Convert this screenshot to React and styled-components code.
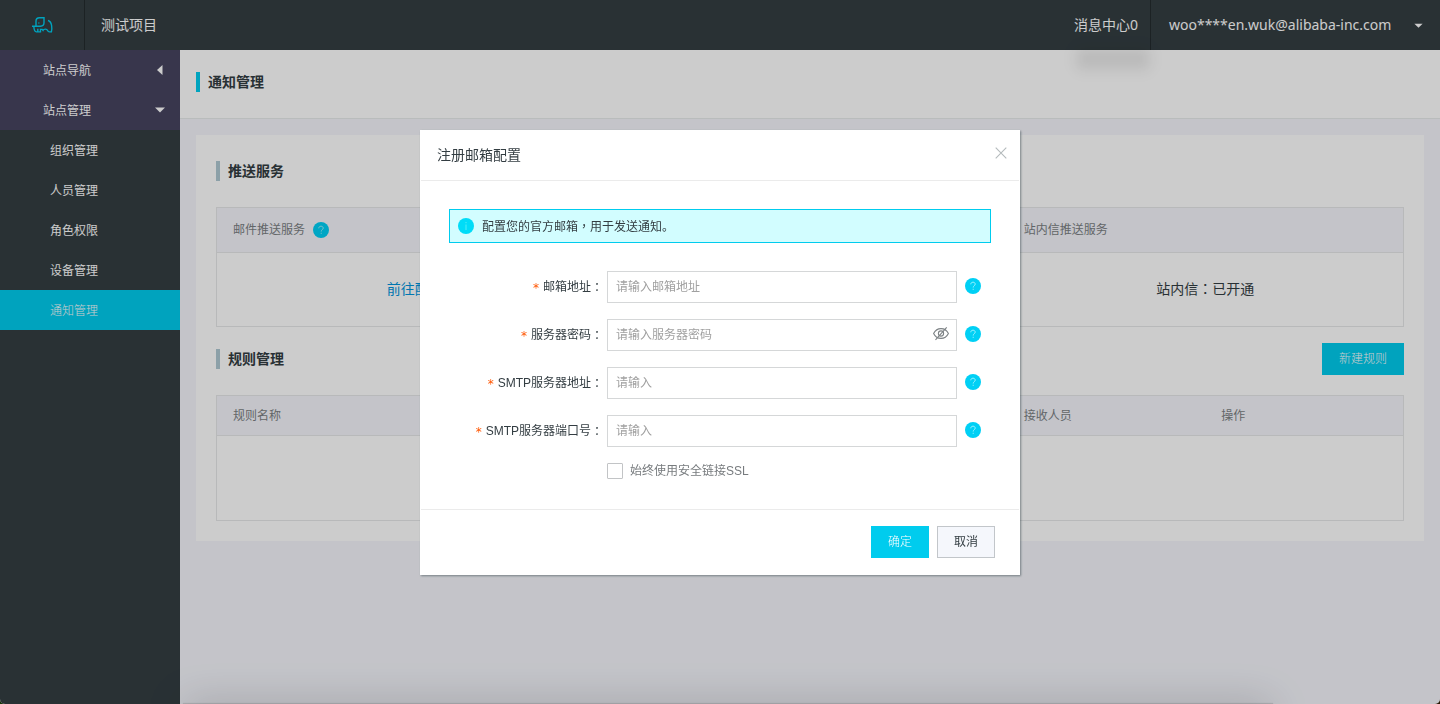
import React, { useState } from 'react';
import styled, { createGlobalStyle, css } from 'styled-components';

const latin = '"Noto Sans", "Noto Sans CJK SC", sans-serif';
const base = '"Liberation Sans", "Noto Sans CJK SC", sans-serif';

const GlobalStyle = createGlobalStyle`
  *, *::before, *::after { box-sizing: border-box; }
  body {
    margin: 0;
    background: linear-gradient(90deg, #17350a, #2b1a05);
    font-family: ${base};
    font-size: 12px;
    line-height: 20px;
    color: #333d42;
  }
  button, input { font: inherit; color: inherit; }
  a { text-decoration: none; }
  h1, h2 { margin: 0; }
`;

const Shell = styled.div`
  position: relative;
  min-height: 100vh;
  display: flex;
  flex-direction: column;
  overflow: hidden;
  border-radius: 0 0 5px 5px;
  background: #f5f6fc;
`;

const TopBar = styled.header`
  height: 50px;
  display: flex;
  align-items: stretch;
  background: #343e42;
  color: #fff;
  font-family: ${latin};
  font-size: 14px;
`;

const LogoLink = styled.a`
  width: 85px;
  display: flex;
  align-items: center;
  justify-content: center;
  border-right: 1px solid #232b2e;
  color: #00ccee;
`;

const ProjectName = styled.div`
  flex: 1;
  display: flex;
  align-items: center;
  padding: 0 16px;
`;

const TopItem = styled.button`
  display: flex;
  align-items: center;
  gap: 14px;
  border: 0;
  background: none;
  padding: 0 16px 0 18px;
`;

const MessageItem = styled(TopItem)`
  position: relative;
  padding: 0 12px;
  border-right: 1px solid #232b2e;

  &::after {
    content: '';
    position: absolute;
    left: 18px;
    right: 4px;
    bottom: -16px;
    height: 14px;
    background: rgba(0, 0, 0, 0.08);
    box-shadow: 0 0 12px 4px rgba(0, 0, 0, 0.08);
    filter: blur(4px);
  }
`;

const UserName = styled.span`
  min-width: 230px;
  text-align: left;
`;

const Columns = styled.div`
  flex: 1;
  display: flex;
`;

const SideBar = styled.nav`
  flex: 0 0 180px;
  background: #343e42;
`;

const rowBase = css`
  width: 100%;
  height: 40px;
  display: flex;
  align-items: center;
  color: #fff;
`;

const GroupButton = styled.button`
  ${rowBase}
  justify-content: space-between;
  border: 0;
  padding: 2px 14px 0 43px;
  background: #464460;

  svg { margin-bottom: 2px; }
`;

const MenuLink = styled.a`
  ${rowBase}
  padding: 2px 0 0 50px;
  background: ${(p) => (p.$active ? '#00ccee' : 'transparent')};
  font-weight: ${(p) => (p.$active ? 300 : 400)};
`;

const Main = styled.main`
  flex: 1;
  min-width: 0;
`;

const PageHead = styled.div`
  height: 69px;
  display: flex;
  align-items: center;
  padding: 0 16px 4px;
  background: #fff;
  border-bottom: 1px solid #e8ebeb;
`;

const Heading = styled.h2`
  display: flex;
  gap: 8px;
  font-size: 14px;
  line-height: 20px;
  font-weight: 700;

  &::before {
    content: '';
    width: 4px;
    height: 20px;
    background: ${(p) => p.$accent};
  }
`;

const Card = styled.section`
  margin: 16px;
  padding: 20px;
  background: #fff;
`;

const SectionHead = styled.div`
  height: 32px;
  display: flex;
  align-items: center;
  justify-content: space-between;
  margin: ${(p) => (p.$spaced ? '16px 0 20px' : '0 0 20px')};
`;

const Button = styled.button`
  height: 32px;
  padding: 0 16px;
  font-weight: ${(p) => (p.$primary ? 300 : 400)};
  color: ${(p) => (p.$primary ? '#fff' : '#333d42')};
  background: ${(p) => (p.$primary ? '#00ccee' : '#f5f7fc')};
  border: 1px solid ${(p) => (p.$primary ? '#00ccee' : '#c2c6ca')};
`;

const Table = styled.table`
  width: 100%;
  table-layout: fixed;
  border-collapse: separate;
  border-spacing: 0;
  border: 1px solid #e6e8e9;

  th {
    height: ${(p) => p.$headHeight};
    padding: 0 16px;
    text-align: left;
    font-weight: 400;
    color: #7b7f83;
    background: #f5f6fc;
    border-bottom: 1px solid #e6e8e9;
  }

  td {
    height: ${(p) => p.$bodyHeight};
    padding: 0 16px 2px;
    text-align: center;
    font-size: 14px;
  }
`;

const ThContent = styled.span`
  display: flex;
  align-items: center;
  gap: 8px;
`;

const ConfigLink = styled.a`
  color: #0094dd;
`;

const Punct = styled.span`
  font-family: "Noto Sans CJK TC", sans-serif;
`;

const Mask = styled.div`
  position: fixed;
  inset: 0;
  display: flex;
  justify-content: center;
  align-items: flex-start;
  padding-top: 130px;
  border-radius: 0 0 5px 5px;
  background: rgba(0, 0, 0, 0.2);
`;

const WindowShade = styled.div`
  position: fixed;
  left: 184px;
  right: 168px;
  bottom: -20px;
  height: 20px;
  box-shadow: 0 0 40px rgba(0, 0, 0, 0.22), 0 0 1px 1px rgba(0, 0, 0, 0.12);
`;

const Dialog = styled.form`
  width: 600px;
  border: 1px solid #fff;
  background: #fff;
  box-shadow: 1px 1px 2px rgba(40, 55, 62, 0.5);
`;

const DialogHead = styled.div`
  height: 50px;
  display: flex;
  align-items: center;
  justify-content: space-between;
  padding: 0 10px 2px 16px;
  border-bottom: 1px solid #ebebeb;
`;

const DialogTitle = styled.h1`
  font-size: 14px;
  font-weight: 400;
`;

const CloseButton = styled.button`
  display: flex;
  padding: 0 2px 4px;
  border: 0;
  background: none;
  color: #b4babc;
`;

const DialogBody = styled.div`
  padding: 28px;
`;

const Notice = styled.div`
  height: 34px;
  display: flex;
  align-items: center;
  gap: 8px;
  margin-bottom: 28px;
  padding: 0 8px;
  border: 1px solid #00ccee;
  background: #d2fdff;
`;

const FieldRow = styled.div`
  display: grid;
  grid-template-columns: 158px 350px 24px;
  align-items: center;
  justify-items: stretch;
  margin-bottom: 16px;
`;

const FieldLabel = styled.label`
  display: flex;
  justify-content: flex-end;
  padding-right: 4px;
  white-space: nowrap;
`;

const Required = styled.span`
  margin-right: 4px;
  padding-top: 2px;
  line-height: 18px;
  color: #ff5500;
  font-family: "DejaVu Sans", sans-serif;
`;

const InputBox = styled.div`
  height: 32px;
  display: flex;
  align-items: center;
  padding: 0 7px 0 8px;
  border: 1px solid #d5d7d8;
  background: #fff;
`;

const Input = styled.input`
  flex: 1;
  min-width: 0;
  padding: 0;
  border: 0;
  outline: 0;
  background: none;

  &::placeholder { color: #a0a0a0; opacity: 1; }
`;

const IconButton = styled.button`
  display: flex;
  padding: 0 0 2px;
  border: 0;
  background: none;
  color: #7d8285;
`;

const FieldHelp = styled.span`
  display: flex;
  justify-content: flex-end;
  padding-bottom: 2px;
`;

const CheckLabel = styled.label`
  height: 18px;
  display: flex;
  align-items: flex-start;
  gap: 7px;
  padding-left: 158px;
  line-height: 16px;
  color: #777b7e;
`;

const CheckBox = styled.input`
  appearance: none;
  width: 16px;
  height: 16px;
  margin: 0;
  border: 1px solid #c2c4c6;
  border-radius: 1px;
  background: #fff;

  &:checked { background: #00ccee; }
`;

const DialogFoot = styled.div`
  display: flex;
  justify-content: flex-end;
  gap: 8px;
  padding: 16px 24px;
  border-top: 1px solid #ebebeb;
`;

const Elephant = () => (
  <svg width="22" height="18" viewBox="0 0 22 18" fill="none" stroke="currentColor" strokeWidth="1.4" aria-hidden="true">
    <path d="M1 10.200h8.500c2 0 3.500-1.400 3.500-3.400V1.800H8.500C6.300 1.800 5 3.200 5 5.300v4.900" />
    <path d="M2.800 10.500c.2 2.600.8 5.200 2.600 5.400h1.400v-3.200M6.800 15.900h2.700v-2.500h1.700l.8 1c.8-1.600 3.800-1.800 4.600.2.300.8.900 1.300 1.900 1.300h1.900c.5-1.600.5-4.300.2-6.400-.4-2.500-1.500-4.400-3.600-5" />
    <path d="M7.800 6.500v.900" />
  </svg>
);

const CaretLeft = () => (
  <svg width="12" height="12" viewBox="0 0 12 12" fill="#fff" aria-hidden="true">
    <path d="M8.500 1v10L3 6z" />
  </svg>
);

const CaretDown = ({ small }) => (
  <svg width={small ? 11 : 12} height={small ? 11 : 12} viewBox="0 0 12 12" fill="#fff" aria-hidden="true">
    <path d={small ? 'M1.500 4h9L6 8.500z' : 'M1 3.500h10L6 8.500z'} />
  </svg>
);

const HelpIcon = () => (
  <svg width="16" height="16" viewBox="0 0 16 16" role="img" aria-label="帮助">
    <circle cx="8" cy="8" r="8" fill="#00d0f5" />
    <path d="M5.800 6.300C5.800 5 6.700 4.200 8 4.200s2.200.8 2.200 1.900c0 1.600-2 1.700-2 3.400M8.200 10.800v1" fill="none" stroke="#9df3ff" strokeWidth="1" />
  </svg>
);

const InfoIcon = () => (
  <svg width="16" height="16" viewBox="0 0 16 16" aria-hidden="true">
    <circle cx="8" cy="8" r="8" fill="#00dcf8" />
    <path d="M8 4v1.200M8 6.500V12" stroke="#55ecf5" strokeWidth="1" />
  </svg>
);

const CloseIcon = () => (
  <svg width="12" height="12" viewBox="0 0 12 12" stroke="currentColor" strokeWidth="1.100" aria-hidden="true">
    <path d="M.7.7l10.600 10.600M11.300.7L.7 11.300" />
  </svg>
);

const EyeOff = () => (
  <svg width="16" height="16" viewBox="0 0 16 16" fill="none" stroke="currentColor" strokeWidth="1.100" aria-hidden="true">
    <path d="M.6 7.500C2.200 4.300 4.800 2.600 8 2.600s5.800 1.700 7.400 4.900c-1.600 3.200-4.200 4.900-7.400 4.900S2.200 10.700.6 7.500z" />
    <circle cx="8" cy="7.500" r="2.600" />
    <path d="M13.700 1.300L2.500 13.800" />
  </svg>
);

const menu = ['组织管理', '人员管理', '角色权限', '设备管理', '通知管理'];

const ruleColumns = ['规则名称', '', '', '', '接收人员', '操作'];

const fields = [
  { id: 'mail', label: '邮箱地址', hint: '请输入邮箱地址' },
  { id: 'password', label: '服务器密码', hint: '请输入服务器密码', secret: true },
  { id: 'smtp-host', label: 'SMTP服务器地址', hint: '请输入' },
  { id: 'smtp-port', label: 'SMTP服务器端口号', hint: '请输入' },
];

function Field({ id, label, hint, secret }) {
  const [shown, setShown] = useState(false);
  return (
    <FieldRow>
      <FieldLabel htmlFor={id}>
        <Required>*</Required>
        {label}
        <Punct>：</Punct>
      </FieldLabel>
      <InputBox>
        <Input id={id} type={secret && !shown ? 'password' : 'text'} placeholder={hint} />
        {secret && (
          <IconButton type="button" aria-label="显示密码" onClick={() => setShown(!shown)}>
            <EyeOff />
          </IconButton>
        )}
      </InputBox>
      <FieldHelp><HelpIcon /></FieldHelp>
    </FieldRow>
  );
}

export default function App() {
  return (
    <>
      <GlobalStyle />
      <Shell>
        <TopBar>
          <LogoLink href="#" aria-label="首页"><Elephant /></LogoLink>
          <ProjectName>测试项目</ProjectName>
          <MessageItem type="button">消息中心0</MessageItem>
          <TopItem type="button">
            <UserName>woo****en.wuk@alibaba-inc.com</UserName>
            <CaretDown small />
          </TopItem>
        </TopBar>
        <Columns>
          <SideBar>
            <GroupButton type="button">站点导航<CaretLeft /></GroupButton>
            <GroupButton type="button">站点管理<CaretDown /></GroupButton>
            {menu.map((name) => (
              <MenuLink key={name} href="#" $active={name === '通知管理'}>{name}</MenuLink>
            ))}
          </SideBar>
          <Main>
            <PageHead>
              <Heading $accent="#00ccee">通知管理</Heading>
            </PageHead>
            <Card>
              <SectionHead>
                <Heading $accent="#b0c8d2">推送服务</Heading>
              </SectionHead>
              <Table $headHeight="45px" $bodyHeight="73px">
                <thead>
                  <tr>
                    <th><ThContent>邮件推送服务<HelpIcon /></ThContent></th>
                    <th />
                    <th>站内信推送服务</th>
                  </tr>
                </thead>
                <tbody>
                  <tr>
                    <td><ConfigLink href="#">前往配置</ConfigLink></td>
                    <td />
                    <td>站内信<Punct>：</Punct>已开通</td>
                  </tr>
                </tbody>
              </Table>
              <SectionHead $spaced>
                <Heading $accent="#b0c8d2">规则管理</Heading>
                <Button type="button" $primary>新建规则</Button>
              </SectionHead>
              <Table $headHeight="40px" $bodyHeight="84px">
                <thead>
                  <tr>{ruleColumns.map((name, i) => <th key={i}>{name}</th>)}</tr>
                </thead>
                <tbody>
                  <tr><td colSpan={6} /></tr>
                </tbody>
              </Table>
            </Card>
          </Main>
        </Columns>
      </Shell>
      <WindowShade />
      <Mask>
        <Dialog role="dialog" aria-labelledby="dialog-title" onSubmit={(e) => e.preventDefault()}>
          <DialogHead>
            <DialogTitle id="dialog-title">注册邮箱配置</DialogTitle>
            <CloseButton type="button" aria-label="关闭"><CloseIcon /></CloseButton>
          </DialogHead>
          <DialogBody>
            <Notice>
              <InfoIcon />
              <span>配置您的官方邮箱<Punct>，</Punct>用于发送通知。</span>
            </Notice>
            {fields.map((field) => <Field key={field.id} {...field} />)}
            <CheckLabel>
              <CheckBox type="checkbox" />
              始终使用安全链接SSL
            </CheckLabel>
          </DialogBody>
          <DialogFoot>
            <Button type="submit" $primary>确定</Button>
            <Button type="button">取消</Button>
          </DialogFoot>
        </Dialog>
      </Mask>
    </>
  );
}
